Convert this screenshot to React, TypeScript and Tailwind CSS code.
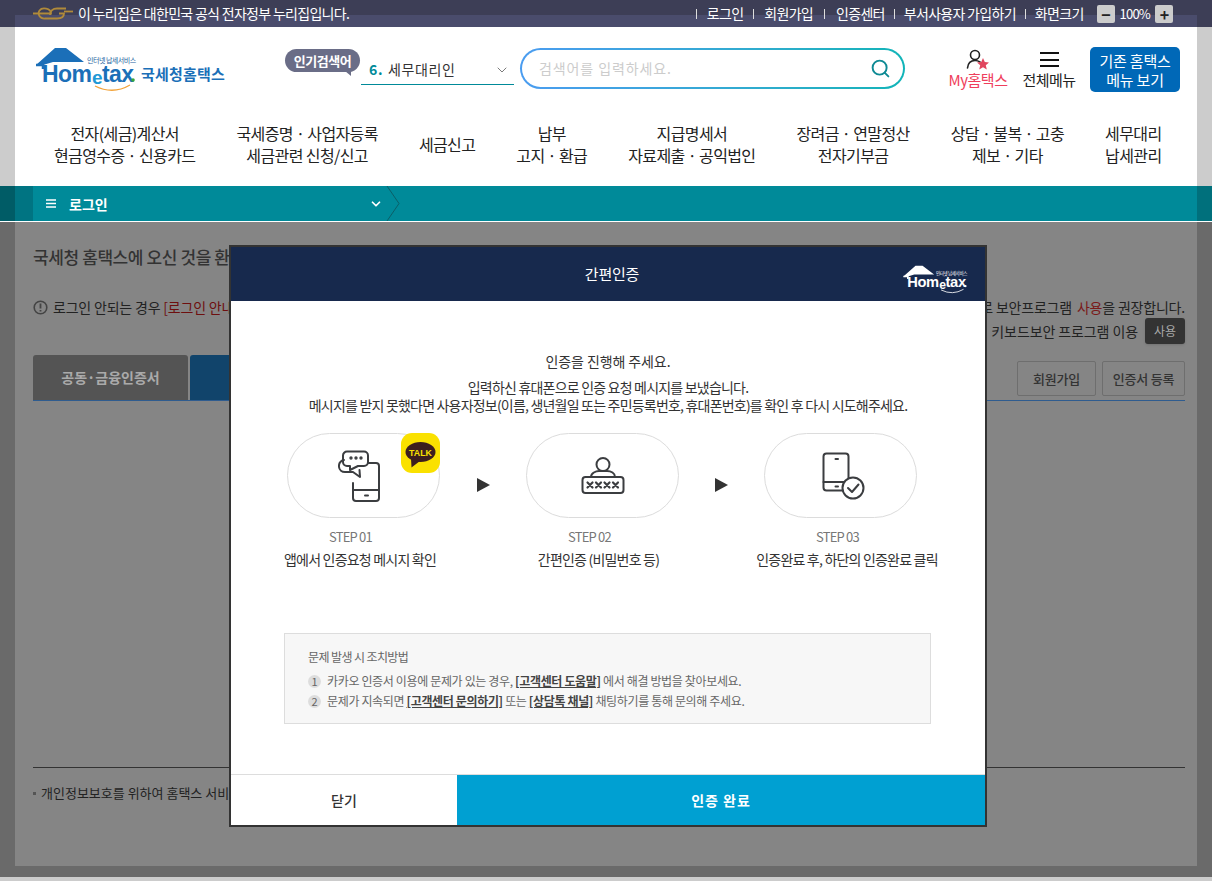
import { Search, ChevronDown } from 'lucide-react';

const navItems = [
  ['전자(세금)계산서', '현금영수증 · 신용카드'],
  ['국세증명 · 사업자등록', '세금관련 신청/신고'],
  ['세금신고'],
  ['납부', '고지 · 환급'],
  ['지급명세서', '자료제출 · 공익법인'],
  ['장려금 · 연말정산', '전자기부금'],
  ['상담 · 불복 · 고충', '제보 · 기타'],
  ['세무대리', '납세관리'],
];

function Logo({ white }: { white?: boolean }) {
  const main = white ? '#ffffff' : '#1b6fb8';
  return (
    <svg width="102" height="47" viewBox="0 0 102 47" className="block">
      <path d="M1 18 L20 1 L31 1 L49 15 L18 15 L8 18 Z" fill={main} />
      <path d="M1 18 H8 V22" fill="none" stroke={main} strokeWidth="2.5" />
      <text x="7" y="34.5" fontFamily="Liberation Sans" fontWeight="700" fontSize="23" letterSpacing="-0.6" fill={main}>
        Hom
      </text>
      <text x="57" y="37" fontFamily="Liberation Sans" fontWeight="700" fontSize="19" fill={white ? '#ffffff' : '#1f9ad6'}>
        e
      </text>
      <text x="67" y="34.5" fontFamily="Liberation Sans" fontWeight="700" fontSize="23" letterSpacing="-0.6" fill={main}>
        tax
      </text>
      <circle cx="98" cy="33" r="1.8" fill={white ? '#ffffff' : '#3aa63a'} />
      <path d="M60 39 Q78 48 95 38" fill="none" stroke={white ? '#ffffff' : '#f2a33a'} strokeWidth="1.3" />
      <text x="52" y="16" fontFamily="Noto Sans CJK KR" fontSize="7" letterSpacing="-0.5" fill={white ? '#ffffff' : '#1b5f9e'}>
        인터넷 납세서비스
      </text>
    </svg>
  );
}

function StepOneIcon() {
  return (
    <svg width="44" height="52" viewBox="0 0 44 52" className="mr-[7px]" fill="none" stroke="#3b3d40" strokeWidth="2" strokeLinejoin="round" strokeLinecap="round">
      <path d="M27 13 H38 a3 3 0 0 1 3 3 V48 a3 3 0 0 1 -3 3 H18 a3 3 0 0 1 -3 -3 V33" />
      <path d="M15 40 H41" />
      <path d="M27 45.5 H30" />
      <path d="M9 1.5 H26 a4 4 0 0 1 4 4 V12 a4 4 0 0 1 -4 4 H20 L12 20 L12 16 H9 a4 4 0 0 1 -4 -4 V5.5 a4 4 0 0 1 4 -4 Z" fill="#fff" />
      <path d="M6 10 C2 11 0.7 14 1 17 C1.3 20 4 22 7 22 H15 L22 27 L21.5 20" />
      <circle cx="13" cy="8" r="0.7" fill="#3b3d40" />
      <circle cx="18" cy="8" r="0.7" fill="#3b3d40" />
      <circle cx="23" cy="8" r="0.7" fill="#3b3d40" />
    </svg>
  );
}

function StepTwoIcon() {
  const xs = [9, 17.5, 26, 34.5];
  return (
    <svg width="44" height="38" viewBox="0 0 44 38" fill="none" stroke="#3b3d40" strokeWidth="2" strokeLinecap="round">
      <circle cx="22" cy="7.5" r="6.5" />
      <path d="M10 20 C10 16 15 14 18 14 H26 C30 14 34 16 34 20" />
      <rect x="1.5" y="20" width="41" height="16" rx="3" />
      {xs.map((x) => (
        <path key={x} d={`M${x - 2.5} 25.5 L${x + 2.5} 30.5 M${x + 2.5} 25.5 L${x - 2.5} 30.5`} strokeWidth="2.2" />
      ))}
    </svg>
  );
}

function StepThreeIcon() {
  return (
    <svg width="46" height="48" viewBox="0 0 46 48" className="ml-[9px]" fill="none" stroke="#3b3d40" strokeWidth="2" strokeLinecap="round" strokeLinejoin="round">
      <rect x="1.5" y="1.5" width="25" height="37" rx="3" />
      <path d="M1.5 30 H26.5" />
      <path d="M13.5 7 H16" />
      <path d="M13.5 34.5 H16" />
      <circle cx="31" cy="36" r="10.5" fill="#fff" />
      <path d="M26 36 L30 40 L36.5 32.5" />
    </svg>
  );
}

function KakaoBadge() {
  return (
    <svg width="39" height="40" viewBox="0 0 39 40" className="absolute -right-[1px] -top-[1px]">
      <rect width="39" height="40" rx="11" fill="#fae100" />
      <ellipse cx="19.5" cy="19" rx="15" ry="10" fill="#3c1e1e" />
      <path d="M10 26 L10.5 34.5 L19 28 Z" fill="#3c1e1e" />
      <text x="19.5" y="22.5" textAnchor="middle" fontFamily="Liberation Sans" fontWeight="700" fontSize="8.8" fill="#fae100">
        TALK
      </text>
    </svg>
  );
}

function Arrow({ width }: { width: string }) {
  return (
    <div className={`flex h-[85px] items-center justify-center pt-[18px] ${width}`}>
      <span className="h-0 w-0 border-y-[7px] border-l-[13px] border-y-transparent border-l-[#333]" />
    </div>
  );
}

interface StepProps {
  label: string;
  desc: string;
  icon: React.ReactNode;
  badge?: boolean;
  labelClass: string;
  descClass: string;
}

function Step({ label, desc, icon, badge, labelClass, descClass }: StepProps) {
  return (
    <div className="flex w-[153px] flex-col items-center">
      <div className="relative flex h-[85px] w-[153px] items-center justify-center rounded-full border border-[#dcdcdc] bg-white">
        {icon}
        {badge && <KakaoBadge />}
      </div>
      <p className={`mt-[10px] h-[18px] text-[13px] leading-[18px] tracking-[-0.8px] text-[#777] ${labelClass}`}>{label}</p>
      <p className={`mt-[3px] whitespace-nowrap text-[14px] leading-[20px] tracking-[-0.8px] text-[#333] ${descClass}`}>{desc}</p>
    </div>
  );
}

function Modal() {
  return (
    <div className="absolute left-[229px] top-[245px] flex h-[582px] w-[758px] flex-col border-2 border-[#333] bg-white">
      <div className="relative flex h-[54px] shrink-0 items-center justify-center bg-[#17294d] pl-[8px]">
        <span className="text-[15px] tracking-[-0.2px] text-white">간편인증</span>
        <div className="absolute right-[17px] top-[18px] origin-top-right scale-[0.64]">
          <Logo white />
        </div>
      </div>

      <div className="flex flex-1 flex-col items-center">
        <p className="mt-[50px] text-[14px] leading-[20px] tracking-[-0.1px] text-[#333]">인증을 진행해 주세요.</p>
        <p className="mt-[7px] text-[14px] leading-[18px] tracking-[-0.8px] text-[#333]">입력하신 휴대폰으로 인증 요청 메시지를 보냈습니다.</p>
        <p className="text-[14px] leading-[18px] tracking-[-0.8px] text-[#333]">
          메시지를 받지 못했다면 사용자정보(이름, 생년월일 또는 주민등록번호, 휴대폰번호)를 확인 후 다시 시도해주세요.
        </p>

        <div className="mr-[12px] mt-[19px] flex items-start">
          <Step label="STEP 01" desc="앱에서 인증요청 메시지 확인" icon={<StepOneIcon />} badge labelClass="mr-[26px]" descClass="mr-[7px]" />
          <Arrow width="w-[86px]" />
          <Step label="STEP 02" desc="간편인증 (비밀번호 등)" icon={<StepTwoIcon />} labelClass="mr-[26px]" descClass="mr-[8px]" />
          <Arrow width="w-[85px]" />
          <Step label="STEP 03" desc="인증완료 후, 하단의 인증완료 클릭" icon={<StepThreeIcon />} labelClass="mr-[6px]" descClass="ml-[13px]" />
        </div>

        <div className="mr-[1px] mt-[64px] h-[91px] w-[647px] border border-[#ddd] bg-[#f7f7f7] pl-[23px] pt-[14px] text-[12px] tracking-[-0.35px] text-[#666]">
          <p className="leading-[18px] tracking-[-0.6px]">문제 발생 시 조치방법</p>
          <div className="mt-[6px] flex h-[18px] items-center">
            <span className="mr-[6px] flex h-[13px] w-[13px] items-center justify-center rounded-full bg-[#ddd] text-[11px] text-[#666]">1</span>
            <span>
              카카오 인증서 이용에 문제가 있는 경우, <b className="font-bold text-[#444] underline">[고객센터 도움말]</b> 에서 해결 방법을 찾아보세요.
            </span>
          </div>
          <div className="mt-[2px] flex h-[18px] items-center">
            <span className="mr-[6px] flex h-[13px] w-[13px] items-center justify-center rounded-full bg-[#ddd] text-[11px] text-[#666]">2</span>
            <span>
              문제가 지속되면 <b className="font-bold text-[#444] underline">[고객센터 문의하기]</b> 또는 <b className="font-bold text-[#444] underline">[상담톡 채널]</b> 채팅하기를 통해 문의해 주세요.
            </span>
          </div>
        </div>
      </div>

      <div className="flex h-[51px] shrink-0 border-t border-[#ddd]">
        <button className="w-[226px] pt-[1px] text-[14px] font-medium text-[#333]">닫기</button>
        <button className="flex-1 bg-[#00a0d2] pt-[1px] text-[14px] font-bold tracking-[1px] text-white">인증 완료</button>
      </div>
    </div>
  );
}

export default function App() {
  return (
    <div className="relative h-[881px] w-[1212px] overflow-hidden bg-[#cccccc] font-['Noto_Sans_CJK_KR','Liberation_Sans',sans-serif]">
      {/* Top government banner */}
      <div className="relative h-[27px] bg-[#3d3e56]">
        <div className="absolute bottom-0 left-[15px] right-[15px] h-[12px] bg-[#4a4c6c]" />
        <div className="relative flex h-full items-center text-[14px] tracking-[-0.7px] text-white">
          <svg width="40" height="13" viewBox="0 0 40 13" className="ml-[33px] mr-[5px]" fill="none" stroke="#b08a3a" strokeWidth="1.8">
            <path d="M0 6.5 H18 C18 1 9 0 6.5 3.5 C4 7 7 12 12 11.5 H24 C28 11.5 31 10 31 6.5 H26" />
            <path d="M33 1.5 H24 C20 1.5 17 4 17 8" />
            <path d="M31 4.5 H40" />
          </svg>
          <span>이 누리집은 대한민국 공식 전자정부 누리집입니다.</span>
          <div className="ml-auto mr-[39px] flex items-center">
            <i className="mr-[10px] h-[10px] w-px bg-[#ddd]" />
            <span>로그인</span>
            <i className="mx-[10px] h-[10px] w-px bg-[#ddd]" />
            <span>회원가입</span>
            <i className="mx-[11px] h-[10px] w-px bg-[#ddd]" />
            <span>인증센터</span>
            <i className="mx-[9px] h-[10px] w-px bg-[#ddd]" />
            <span>부서사용자 가입하기</span>
            <i className="mx-[9px] h-[10px] w-px bg-[#ddd]" />
            <span>화면크기</span>
            <span className="ml-[13px] flex h-[18px] w-[18px] items-center justify-center rounded-[2px] bg-[#ccc] text-[16px] font-bold leading-none text-[#222]">−</span>
            <span className="mx-[5px] text-[13px] tracking-[-0.8px]">100%</span>
            <span className="flex h-[18px] w-[18px] items-center justify-center rounded-[2px] bg-[#ccc] text-[16px] font-bold leading-none text-[#222]">+</span>
          </div>
        </div>
      </div>

      {/* Header */}
      <div className="mx-[15px] h-[159px] bg-white">
        <div className="flex h-[95px] items-start pl-[20px] pt-[20px]">
          <Logo />
          <span className="ml-[4px] mt-[16px] text-[15px] font-bold tracking-[0.2px] text-[#1b6fb8]">국세청홈택스</span>

          <div className="relative ml-[60px] mt-[2px] flex h-[23px] w-[75px] items-center justify-center rounded-full bg-[#6a6d87] text-[13px] font-bold tracking-[-0.5px] text-white">
            인기검색어
            <span className="absolute -bottom-[4px] right-[9px] h-0 w-0 border-l-[6px] border-t-[5px] border-l-transparent border-t-[#6a6d87]" />
          </div>
          <div className="ml-[1px] mt-[13px] flex h-[25px] w-[153px] items-center border-b border-[#008a99] pb-[5px] pl-[8px] pr-[4px] text-[14px] tracking-[0.6px] text-[#333]">
            <b className="mr-[5px] font-bold text-[#008a99]">6.</b>
            <span>세무대리인</span>
            <ChevronDown className="ml-auto text-[#666]" size={16} strokeWidth={1.3} />
          </div>

          <div className="ml-[6px] mt-[1px] h-[41px] w-[385px] rounded-full bg-gradient-to-r from-[#4a9cf0] to-[#10b4b8] p-[2px]">
            <div className="flex h-full items-center rounded-full bg-white pl-[17px] pr-[12px]">
              <span className="text-[14px] tracking-[0.9px] text-[#ccc]">검색어를 입력하세요.</span>
              <Search className="ml-auto text-[#0e8a94]" size={21} strokeWidth={2.2} />
            </div>
          </div>

          <div className="ml-[42px] mt-[2px] flex w-[62px] flex-col items-center">
            <svg width="24" height="22" viewBox="0 0 24 22" fill="none">
              <circle cx="9" cy="6" r="4.5" stroke="#222" strokeWidth="1.6" />
              <path d="M1.5 19 C2 14 5 11.5 9 11.5 C11 11.5 12.5 12 14 13" stroke="#222" strokeWidth="1.6" strokeLinecap="round" />
              <path d="M17 9 L18.8 13 L23 13.4 L19.8 16.2 L20.8 20.5 L17 18.2 L13.2 20.5 L14.2 16.2 L11 13.4 L15.2 13 Z" fill="#e0475f" />
            </svg>
            <span className="-mt-[1px] whitespace-nowrap text-[15px] leading-[20px] tracking-[-0.5px] text-[#ef3e5c]">My홈택스</span>
          </div>
          <div className="ml-[12px] mt-[2px] flex w-[56px] flex-col items-center">
            <div className="mt-[3px] flex h-[15px] flex-col justify-between">
              <i className="block h-[2px] w-[19px] bg-[#111]" />
              <i className="block h-[2px] w-[19px] bg-[#111]" />
              <i className="block h-[2px] w-[19px] bg-[#111]" />
            </div>
            <span className="mt-[3px] whitespace-nowrap text-[15px] leading-[20px] tracking-[-0.5px] text-[#222]">전체메뉴</span>
          </div>
          <div className="ml-[13px] flex h-[45px] w-[90px] flex-col items-center justify-center rounded-[5px] bg-[#0068b7] text-[15px] leading-[19px] tracking-[-0.2px] text-white">
            <span>기존 홈택스</span>
            <span>메뉴 보기</span>
          </div>
        </div>

        <div className="flex h-[44px] items-center gap-[41px] pl-[39px] text-[16px] leading-[22px] tracking-[-0.6px] text-[#222]">
          {navItems.map((lines) => (
            <div key={lines[0]} className="shrink-0 text-center">
              {lines.map((line) => (
                <p key={line} className="whitespace-nowrap">{line}</p>
              ))}
            </div>
          ))}
        </div>
      </div>

      {/* Breadcrumb bar */}
      <div className="flex h-[36px] border-b border-white bg-[#005c66]">
        <div className="ml-[15px] flex flex-1 bg-[#007482] pl-[18px]">
          <div className="flex flex-1 items-center bg-[#008a99] pl-[13px]">
            <svg width="10" height="9" viewBox="0 0 10 9" className="mr-[13px]">
              <path d="M0 1 H10 M0 4.5 H10 M0 8 H10" stroke="#fff" strokeWidth="1.6" />
            </svg>
            <span className="w-[300px] pt-[1px] text-[14px] font-bold text-white">로그인</span>
            <ChevronDown className="text-white" size={14} strokeWidth={3} />
            <svg width="14" height="35" viewBox="0 0 14 35" className="ml-[3px]" fill="none">
              <path d="M1 0 L13 17.5 L1 35" stroke="#0b5f68" strokeWidth="1" />
            </svg>
          </div>
        </div>
        <div className="w-[15px] bg-[#00707c]" />
      </div>

      {/* Dimmed page content */}
      <div className="flex h-[655px] bg-[#6a6a6a]">
        <div className="mx-[15px] h-[644px] w-[1182px] bg-[#858585] pl-[18px] pr-[12px] text-[#222]">
          <p className="pt-[23px] text-[17px] font-medium leading-[24px] tracking-[-0.4px] text-[#333]">국세청 홈택스에 오신 것을 환</p>
          <div className="mt-[28px] flex h-[20px] items-center justify-between text-[14px] tracking-[-0.2px]">
            <div className="flex items-center">
              <svg width="15" height="15" viewBox="0 0 15 15" className="mr-[5px]" fill="none">
                <circle cx="7.5" cy="7.5" r="6.3" stroke="#444" strokeWidth="1.6" />
                <path d="M7.5 3.5 V8.5 M7.5 10 V11.5" stroke="#444" strokeWidth="1.8" />
              </svg>
              <span>로그인 안되는 경우 <span className="text-[#6e0f0f]">[로그인 안내]</span></span>
            </div>
            <span>로 보안프로그램 <span className="ml-[2px] text-[#7a1a1a]">사용</span>을 권장합니다.</span>
          </div>
          <div className="mt-[1px] flex h-[26px] items-center justify-end text-[14px] tracking-[-0.1px]">
            <span>키보드보안 프로그램 이용</span>
            <span className="ml-[7px] flex h-[26px] w-[40px] items-center justify-center rounded-[3px] bg-[#333] text-[12px] text-[#aaa] shadow-sm">사용</span>
          </div>
          <div className="mt-[12px] flex h-[45px] items-end border-b border-[#2f5c8f]">
            <div className="flex h-[45px] w-[155px] items-center justify-center rounded-t-[3px] bg-[#545454] text-[14px] font-bold text-[#aaa]">공동·금융인증서</div>
            <div className="ml-[2px] h-[45px] w-[200px] rounded-t-[3px] bg-[#11446b]" />
            <div className="mb-[4px] ml-auto flex gap-[6px]">
              <div className="flex h-[35px] w-[79px] items-center justify-center rounded-[2px] border border-[#6e6e6e] text-[13px] font-medium tracking-[-0.2px] text-[#333]">회원가입</div>
              <div className="flex h-[35px] w-[83px] items-center justify-center rounded-[2px] border border-[#6e6e6e] text-[13px] font-medium tracking-[-0.2px] text-[#333]">인증서 등록</div>
            </div>
          </div>
          <div className="mt-[366px] flex items-center border-t border-[#333] pt-[15px] text-[13px] leading-[20px]">
            <i className="mr-[5px] h-[3px] w-[3px] bg-[#555]" />
            <span>개인정보보호를 위하여 홈택스 서비</span>
          </div>
        </div>
      </div>

      <Modal />
    </div>
  );
}
